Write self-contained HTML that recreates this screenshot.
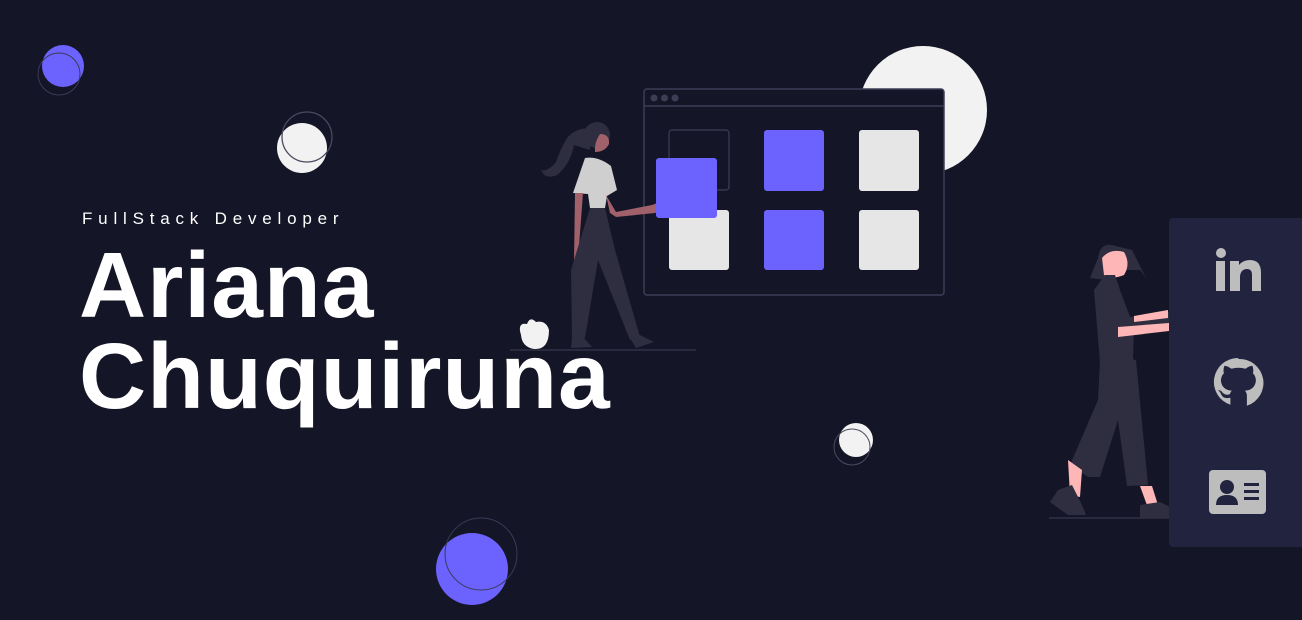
<!DOCTYPE html>
<html><head><meta charset="utf-8"><style>
html,body{margin:0;padding:0;background:#141527;width:1302px;height:620px;overflow:hidden;font-family:"Liberation Sans",sans-serif}
.sub{position:absolute;left:82px;top:209px;color:#fff;font-size:17px;letter-spacing:5.8px;}
.name{position:absolute;left:79px;top:240px;color:#fff;font-weight:bold;font-size:93px;line-height:91px;letter-spacing:1px}
svg{position:absolute;left:0;top:0}
</style></head><body>
<svg width="1302" height="620" viewBox="0 0 1302 620">
<circle cx="63" cy="66" r="21" fill="#6c63ff"/>
<circle cx="59" cy="74" r="21" fill="none" stroke="#3a3a55" stroke-width="1"/>
<circle cx="302" cy="148" r="25" fill="#f2f2f2"/>
<circle cx="307" cy="137" r="25" fill="none" stroke="#4a4a60" stroke-width="1.3"/>
<circle cx="856" cy="440" r="17" fill="#f2f2f2"/>
<circle cx="852" cy="447" r="18" fill="none" stroke="#4a4a60" stroke-width="1"/>
<circle cx="472" cy="569" r="36" fill="#6c63ff"/>
<circle cx="481" cy="554" r="36" fill="none" stroke="#3a3a55" stroke-width="1"/>
<circle cx="923" cy="110" r="64" fill="#f2f2f2"/>
<rect x="644" y="89" width="300" height="206" rx="3" fill="#141527" stroke="#3f3d56" stroke-width="1.5"/>
<line x1="644" y1="106" x2="944" y2="106" stroke="#3f3d56" stroke-width="1.5"/>
<circle cx="654" cy="98" r="3.5" fill="#3f3d56"/><circle cx="664.5" cy="98" r="3.5" fill="#3f3d56"/><circle cx="675" cy="98" r="3.5" fill="#3f3d56"/>
<rect x="669" y="130" width="60" height="60" rx="3" fill="none" stroke="#3f3d56" stroke-width="1.2"/>
<rect x="764" y="130" width="60" height="61" rx="3" fill="#6c63ff"/>
<rect x="859" y="130" width="60" height="61" rx="3" fill="#e6e6e6"/>
<rect x="669" y="210" width="60" height="60" rx="3" fill="#e6e6e6"/>
<rect x="764" y="210" width="60" height="60" rx="3" fill="#6c63ff"/>
<rect x="859" y="210" width="60" height="60" rx="3" fill="#e6e6e6"/>
<!-- person 1 -->
<line x1="510" y1="350" x2="696" y2="350" stroke="#3f3d56" stroke-width="1"/>
<path d="M521 335 Q517 322 527 324 Q530 316 536 322 Q546 320 549 330 Q549 350 534 349 Q522 347 521 335Z" fill="#f2f2f2"/>
<path d="M591 128 Q575 128 567 138 Q560 150 556 162 Q548 172 541 170 Q545 180 557 175 Q570 165 574 145 L590 150Z" fill="#2f2e41"/>
<circle cx="597" cy="135" r="13" fill="#2f2e41"/>
<path d="M600 134 Q610 134 609 144 Q605 152 595 152 Q594 143 600 134Z" fill="#a0616a"/>
<path d="M585 158 Q598 156 611 166 L617 190 L607 196 L605 208 L590 208 L588 194 L573 193 Z" fill="#cfcfcf"/>
<path d="M575 193 L583 193 L578 260 L574 262Z" fill="#a0616a"/>
<path d="M606 195 L616 212 L652 205 L660 202 L662 210 L655 213 L616 217 L610 213Z" fill="#a0616a"/>
<rect x="656" y="158" width="61" height="60" rx="3" fill="#6c63ff"/>
<path d="M590 208 L605 208 L615 250 L640 337 L630 340 L598 260 L585 338 L572 338 L571 270 Z" fill="#2f2e41"/>
<path d="M572 337 L583 337 L592 347 L571 348Z" fill="#2f2e41"/>
<path d="M630 338 L640 335 L654 342 L636 348Z" fill="#2f2e41"/>
<!-- person 2 -->
<line x1="1049" y1="518" x2="1170" y2="518" stroke="#3f3d56" stroke-width="1"/>
<path d="M1112 245 Q1100 243 1098 258 L1090 278 L1106 280 L1112 270 L1140 270 L1146 278 L1132 250Z" fill="#2f2e41"/>
<path d="M1102 258 Q1110 248 1124 252 Q1131 264 1124 275 Q1112 280 1104 275Z" fill="#ffb6b6"/>
<path d="M1105 275 L1115 275 L1120 290 L1130 317 L1170 312 L1170 324 L1134 327 L1133 358 L1135 362 L1100 362 L1094 290Z" fill="#2f2e41"/>
<path d="M1134 316 L1168 310 L1168 318 L1134 322Z M1118 327 L1169 323 L1169 331 L1118 337Z" fill="#ffb6b6"/>
<path d="M1100 360 L1136 360 L1148 485 L1127 486 L1118 420 L1100 477 L1088 477 L1070 465 L1098 400Z" fill="#2f2e41"/>
<path d="M1068 460 L1082 470 L1080 497 L1070 495Z M1140 486 L1152 486 L1158 505 L1148 508Z" fill="#ffb6b6"/>
<path d="M1058 490 L1072 485 L1082 505 L1086 515 L1068 515 L1050 502Z" fill="#2f2e41"/>
<path d="M1140 505 L1160 502 L1170 507 L1170 518 L1140 518Z" fill="#2f2e41"/>
<rect x="1169" y="218" width="140" height="329" rx="4" fill="#22243f"/>
<g fill="#bdbdbd">
<circle cx="1221" cy="253" r="5"/>
<rect x="1216" y="261" width="9" height="30"/>
<path d="M1230 261 h9 v4 q4 -5 11 -5 q11 0 11 13 v18 h-9 v-16 q0 -6 -5 -6 q-6 0 -7 7 v15 h-10z"/>
<path d="M1238 358 a24 24 0 0 0 -7.6 46.8 v-7 q-7 1.5 -9 -3 q-1.5 -3.5 -3.5 -4.5 q2.5 -.5 4 1.5 q2.5 4 8 2.5 q.5 -2.5 2 -3.5 q-10 -1 -11 -10 q0 -4.5 3 -7.5 q-1 -3.5 .5 -7.5 q3 0 7 3 q7 -2 14 0 q4 -3 7 -3 q1.5 4 .5 7.5 q3 3 3 7.5 q-1 9 -11 10 q2 2 2 5 v10 a24 24 0 0 0 -8.4 -46.8z"/>
<rect x="1209" y="470" width="57" height="44" rx="4"/>
</g>
<g fill="#22243f">
<circle cx="1227" cy="487" r="7"/>
<path d="M1216 505 q0 -10 11 -10 q11 0 11 10z"/>
<rect x="1244" y="483" width="15" height="3"/><rect x="1244" y="490" width="15" height="3"/><rect x="1244" y="497" width="15" height="3"/>
</g>
</svg>
<div class="sub">FullStack Developer</div>
<div class="name">Ariana<br>Chuquiruna</div>
</body></html>
